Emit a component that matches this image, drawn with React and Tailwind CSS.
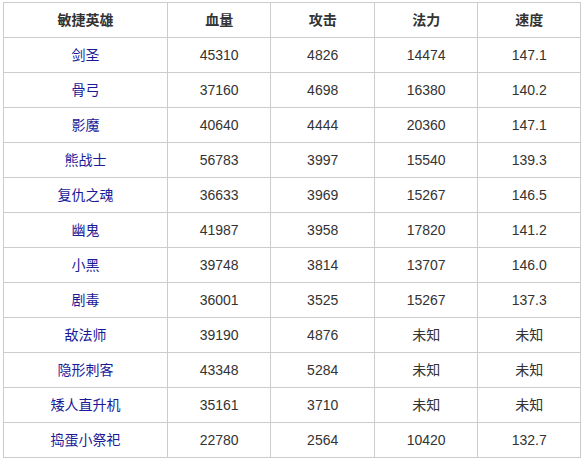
const heroes = [
  ['剑圣', '45310', '4826', '14474', '147.1'],
  ['骨弓', '37160', '4698', '16380', '140.2'],
  ['影魔', '40640', '4444', '20360', '147.1'],
  ['熊战士', '56783', '3997', '15540', '139.3'],
  ['复仇之魂', '36633', '3969', '15267', '146.5'],
  ['幽鬼', '41987', '3958', '17820', '141.2'],
  ['小黑', '39748', '3814', '13707', '146.0'],
  ['剧毒', '36001', '3525', '15267', '137.3'],
  ['敌法师', '39190', '4876', '未知', '未知'],
  ['隐形刺客', '43348', '5284', '未知', '未知'],
  ['矮人直升机', '35161', '3710', '未知', '未知'],
  ['捣蛋小祭祀', '22780', '2564', '10420', '132.7'],
]

const headers = ['敏捷英雄', '血量', '攻击', '法力', '速度']

export default function App() {
  return (
    <div className="w-[583px] h-[460px] bg-white pt-[2px] pl-[3px]">
      <table
        className="border-collapse w-[578px] text-[14px] text-[#333]"
        style={{ fontFamily: '"Liberation Sans", "Noto Sans CJK SC", sans-serif' }}
      >
        <colgroup>
          <col className="w-[165px]" />
          <col className="w-[104px]" />
          <col className="w-[104px]" />
          <col className="w-[104px]" />
          <col className="w-[103px]" />
        </colgroup>
        <thead>
          <tr>
            {headers.map((h) => (
              <th key={h} className="h-[35px] p-0 border border-[#cccccc] text-center font-bold text-[#333]">
                {h}
              </th>
            ))}
          </tr>
        </thead>
        <tbody>
          {heroes.map((row) => (
            <tr key={row[0]}>
              {row.map((cell, i) => (
                <td
                  key={i}
                  className={
                    'h-[35px] p-0 border border-[#cccccc] text-center ' +
                    (i === 0 ? 'text-[#1a1a99]' : 'text-[#333]')
                  }
                >
                  {cell}
                </td>
              ))}
            </tr>
          ))}
        </tbody>
      </table>
    </div>
  )
}
